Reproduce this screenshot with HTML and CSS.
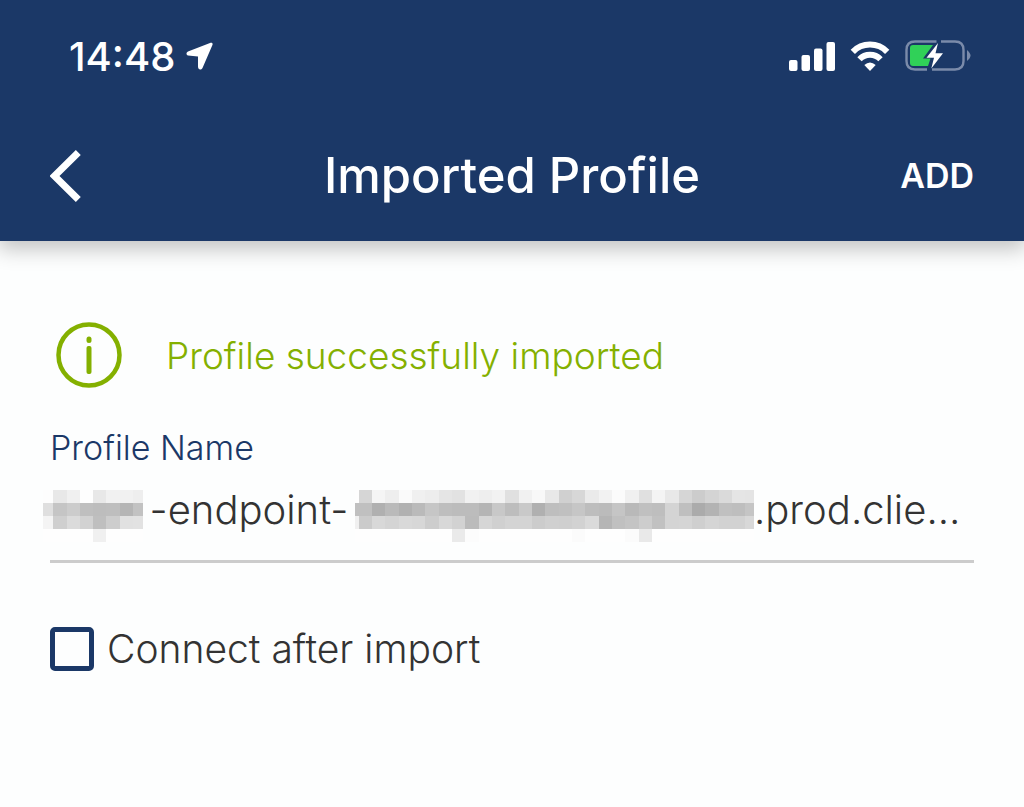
FILE: index.html
```html
<!DOCTYPE html>
<html lang="en">
<head>
<meta charset="utf-8">
<meta name="viewport" content="width=device-width, initial-scale=1">
<title>Imported Profile</title>
<link rel="stylesheet" href="styles.css">
</head>
<body>
<header class="header">
  <div class="status">
    <div class="status-group status-time">
      <span>14:48</span>
      <svg width="27" height="28" viewBox="0 0 27 28" aria-hidden="true"><path d="M24 1 2 9.500C0 10.500 0 13 2 13.500L12 14.500V24.500C12 28 15 28.500 16.500 26L26 4C27.500 1.500 26 .2 24 1Z" fill="#fff"/></svg>
    </div>
    <div class="status-group status-icons">
      <svg width="46" height="30" viewBox="0 0 46 30" aria-hidden="true" fill="#fff"><rect y="19" width="8.500" height="11" rx="2"/><rect x="12.500" y="14" width="8.500" height="16" rx="2"/><rect x="25" y="7.500" width="8.500" height="22.500" rx="2"/><rect x="37.500" y="1" width="8.500" height="29" rx="2"/></svg>
      <svg width="40" height="30" viewBox="0 0 40 30" aria-hidden="true"><path d="M2.800 10.800A24 24 0 0 1 37.200 10.800M9.500 18.200A14.500 14.500 0 0 1 30.500 18.200" fill="none" stroke="#fff" stroke-width="6"/><path d="M14.300 24Q20 19 25.700 24L20 30Z" fill="#fff"/></svg>
      <svg width="66" height="32" viewBox="0 0 66 32" aria-hidden="true"><path d="M31.500 1.500H10Q1.500 1.500 1.500 10V21Q1.500 29.500 10 29.500H22M36 1.500H50Q58.500 1.500 58.500 10V21Q58.500 29.500 50 29.500H27" fill="none" stroke="#7b8baa" stroke-width="2.400"/><path d="M62 10Q65.500 13 65.500 15.500T62 21Z" fill="#7b8baa"/><path d="M8 5H28L18 18.500H25.500L23 26H8Q5 26 5 23V8Q5 5 8 5Z" fill="#30d158"/><path d="M33 3 21.500 17.800H29L26.300 28.500 38 13.200H30.500Z" fill="#fff"/></svg>
    </div>
  </div>
  <div class="toolbar">
    <button class="back" type="button" aria-label="Back"><svg width="32" height="52" viewBox="0 0 32 52" aria-hidden="true"><path d="M28.300 2.500 4.500 26 28.300 49.500" fill="none" stroke="#fff" stroke-width="7"/></svg></button>
    <h1 class="title">Imported Profile</h1>
    <button class="add" type="button">ADD</button>
  </div>
</header>
<main class="content">
  <p class="notice">
    <svg width="66" height="66" viewBox="0 0 66 66" aria-hidden="true"><circle cx="33" cy="33" r="30.500" fill="none" stroke="#84b000" stroke-width="4.500"/><rect x="30.500" y="14.500" width="5" height="6.500" rx="2.500" fill="#84b000"/><rect x="30.500" y="24" width="5" height="28" rx="2" fill="#84b000"/></svg>
    <span>Profile successfully imported</span>
  </p>
  <label class="label" for="name">Profile Name</label>
  <div class="field">
    <svg class="mosaic mosaic-start" width="100" height="52" viewBox="0 0 301 156" data-first="31" data-rows="fd e8 f0 fe e8 f1 f1 ee|df c5 cc bf bd be b5 c2|f4 cf db d2 bf cd e1 e2|fe fe fe fe f0 fe fe fe" aria-hidden="true"></svg>
    <span class="part">-endpoint-</span>
    <svg class="mosaic" width="399" height="52" viewBox="0 0 1197 156" data-first="11" data-rows="fe d6 f5 ee fa f0 ed e5 e2 f1 ee f2 e0 f1 f8 e8 d0 d7 ea f2 fb f0 e0 f4 e8 d6 cc d4 da e5 e4|c0 c0 b0 ba b1 ba c6 be bc bc b5 c8 bd c9 b0 be c0 c6 bd bb c5 b9 c0 be d4 bf ab b3 c0 be c5|f0 cb d8 d4 d9 d7 cd d8 d2 bb d6 d0 d4 d4 cc d0 cf d2 da b5 c0 c4 cd c1 d4 d5 cf d5 d2 d2 d8|fe fe fe fe fe fe fe fe ea fc fe fe fe fe fe fe fe fb fe fe fe fb e9 fe fe fe fe fe fe fe fe" aria-hidden="true"></svg>
    <input class="input" id="name" type="text" value=".prod.clie…">
  </div>
  <label class="option"><input class="check" type="checkbox"><span>Connect after import</span></label>
</main>
<script src="mosaic.js"></script>
</body>
</html>
```
FILE: styles.css
```css
* { box-sizing: border-box; }
body {
  margin: 0;
  min-height: 100vh;
  background: #fdfefe;
  color: #333;
  font-family: Inter, "Liberation Sans", sans-serif;
  font-size: 40px;
  font-weight: 300;
}
button, input { font: inherit; color: inherit; }
svg { display: block; flex: none; }
button {
  padding: 0;
  border: 0;
  background: none;
  cursor: pointer;
}
.header {
  background: #1b3867;
  color: #fff;
  box-shadow: 0 6px 20px 2px rgba(0, 0, 0, 0.24);
}
.status {
  display: flex;
  justify-content: space-between;
  align-items: center;
  height: 112px;
  padding: 0 53px 0 69px;
}
.status-group { display: flex; align-items: center; }
.status-time { gap: 11px; font-weight: 500; }
.status-icons { gap: 15px; }
.toolbar {
  display: grid;
  grid-template-columns: 1fr auto 1fr;
  align-items: center;
  height: 129px;
  padding: 0 50px 2px;
}
.back { justify-self: start; }
.title { margin: 0; font-size: 49px; line-height: 56px; font-weight: 500; }
.add { justify-self: end; font-size: 34px; font-weight: 600; }
.content { padding: 81px 50px 40px; }
.notice {
  display: flex;
  align-items: center;
  gap: 44px;
  margin: 0 0 36px;
  padding-left: 6px;
  color: #84b000;
  font-size: 37px;
}
.label {
  display: block;
  color: #1b3867;
  font-size: 34px;
  line-height: 48px;
}
.field {
  display: flex;
  align-items: flex-start;
  height: 91px;
  padding-top: 12px;
  border-bottom: 3px solid #ccc;
  line-height: 52px;
}
.mosaic { margin-top: 6px; shape-rendering: crispEdges; }
.mosaic-start { margin-left: -7px; }
.part { flex: none; width: 212px; text-align: center; }
.input {
  flex: 1;
  min-width: 0;
  height: 52px;
  padding: 0;
  border: 0;
  outline: 0;
  background: transparent;
}
.option {
  display: flex;
  align-items: center;
  gap: 13px;
  margin-top: 62px;
  font-size: 39px;
}
.check {
  appearance: none;
  flex: none;
  width: 44px;
  height: 44px;
  margin: 0;
  border: 5px solid #1b3867;
  border-radius: 5px;
}
.check:checked { background: #1b3867; }
```
FILE: mosaic.js
```js
// Fills each mosaic with grey cells; the first column may be narrower.
document.querySelectorAll(".mosaic").forEach((svg) => {
  const first = Number(svg.dataset.first);
  svg.dataset.rows.split("|").forEach((row, r) => {
    row.split(" ").forEach((tone, c) => {
      const cell = document.createElementNS("http://www.w3.org/2000/svg", "rect");
      cell.setAttribute("x", c ? first + (c - 1) * 40 : 0);
      cell.setAttribute("y", r * 39);
      cell.setAttribute("width", c ? 40 : first);
      cell.setAttribute("height", 39);
      cell.setAttribute("fill", "#" + tone.repeat(3));
      svg.append(cell);
    });
  });
});
```
